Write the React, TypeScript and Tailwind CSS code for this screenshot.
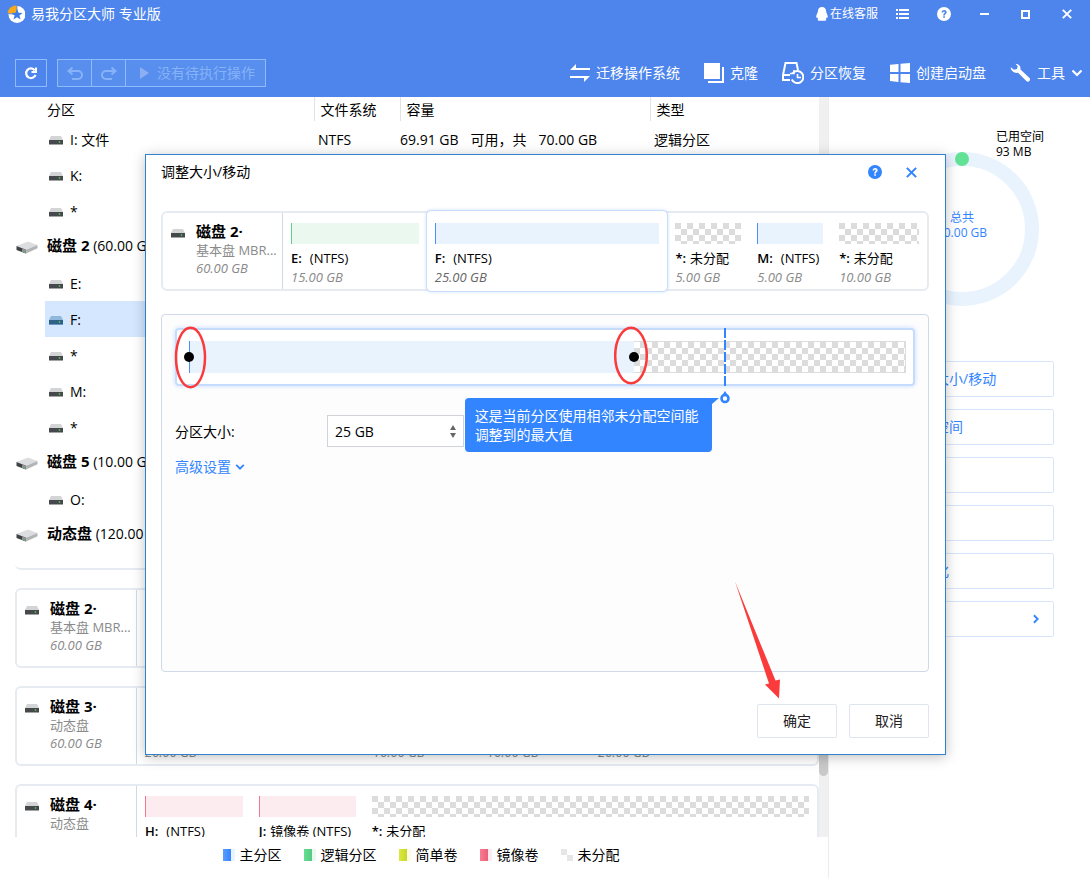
import { useState } from "react";
import type { ReactNode } from "react";
import clsx from "clsx";

type Kind = "primary" | "logical" | "mirror" | "free";

type Partition = {
  name: string;
  fs: string;
  size: string;
  weight: number;
  kind: Kind;
  selected?: boolean;
};

type Row = {
  label: string;
  disk?: string;
  fs?: string;
  free?: string;
  total?: string;
  type?: string;
  selected?: boolean;
};

const rows: Row[] = [
  { label: "I: 文件", fs: "NTFS", free: "69.91 GB", total: "70.00 GB", type: "逻辑分区" },
  { label: "K:" },
  { label: "*" },
  { label: "(60.00 GB)", disk: "磁盘 2" },
  { label: "E:" },
  { label: "F:", selected: true },
  { label: "*" },
  { label: "M:" },
  { label: "*" },
  { label: "(10.00 GB)", disk: "磁盘 5" },
  { label: "O:" },
  { label: "(120.00 GB)", disk: "动态盘" },
];

const disk2: Partition[] = [
  { name: "E:", fs: "(NTFS)", size: "15.00 GB", weight: 144, kind: "logical" },
  { name: "F:", fs: "(NTFS)", size: "25.00 GB", weight: 241, kind: "primary", selected: true },
  { name: "*:", fs: "未分配", size: "5.00 GB", weight: 82, kind: "free" },
  { name: "M:", fs: "(NTFS)", size: "5.00 GB", weight: 82, kind: "primary" },
  { name: "*:", fs: "未分配", size: "10.00 GB", weight: 96, kind: "free" },
];

const disk3: Partition[] = [
  { name: "G:", fs: "(NTFS)", size: "20.00 GB", weight: 228, kind: "mirror" },
  { name: "L:", fs: "(NTFS)", size: "10.00 GB", weight: 114, kind: "mirror" },
  { name: "N:", fs: "(NTFS)", size: "10.00 GB", weight: 111, kind: "mirror" },
  { name: "*:", fs: "未分配", size: "20.00 GB", weight: 227, kind: "free" },
];

const disk4: Partition[] = [
  { name: "H:", fs: "(NTFS)", size: "10.00 GB", weight: 114, kind: "mirror" },
  { name: "J:", fs: "镜像卷 (NTFS)", size: "10.00 GB", weight: 113, kind: "mirror" },
  { name: "*:", fs: "未分配", size: "40.00 GB", weight: 454, kind: "free" },
];

const legend = [
  { label: "主分区", color: "from-[#5a9dff] to-[#3385ff]", tint: "bg-[#e9f3fe]" },
  { label: "逻辑分区", color: "from-[#68dc94] to-[#52cb80]", tint: "bg-[#ebf8f0]" },
  { label: "简单卷", color: "from-[#dbe83c] to-[#c8d52e]", tint: "bg-[#fafce6]" },
  { label: "镜像卷", color: "from-[#f87c92] to-[#ea6078]", tint: "bg-[#fdecef]" },
];

const actions = ["调整大小/移动", "分配空间", "合并", "删除", "格式化"];

const barStyles: Record<Kind, string> = {
  primary: "border-l border-[#4c8ff7] bg-[#e9f3fe]",
  logical: "border-l border-[#5fd08c] bg-[#ebf8f0]",
  mirror: "border-l border-[#f0788e] bg-[#fdecef]",
  free: "bg-[repeating-conic-gradient(#fff_0_25%,#dcdcdc_0_50%)] bg-[length:12px_12px]",
};

// Slider range in GB
const RANGE = 40.3;
const MAX_SIZE = 30.05;

function DriveIcon({ selected }: { selected?: boolean }) {
  return (
    <svg width="14" height="9" viewBox="0 0 14 9" className="shrink-0" aria-hidden="true">
      <path d="M2 0h10l2 4H0z" fill={selected ? "#8fb8dc" : "#d2d4d6"} />
      <rect y="4" width="14" height="4" fill={selected ? "#2f6187" : "#46494b"} />
      <rect y="8" width="14" height="1" fill={selected ? "#6c97bd" : "#a2a4a6"} />
      <circle cx="10.5" cy="6" r="0.8" fill="#4df04d" />
    </svg>
  );
}

function DiskIcon() {
  return (
    <svg width="22" height="13" viewBox="0 0 22 13" aria-hidden="true">
      <path d="M0.5 5L12 0.5L21.5 4L10 8.8z" fill="#dcdddf" />
      <path d="M10 8.8L21.5 4V7.2L10 12.5z" fill="#b2b4b6" />
      <path d="M0.5 5L10 8.8V12.5L0.5 9z" fill="#3f4244" />
      <path d="M6 7.2L10 8.8V12.5L6 11z" fill="#8d9092" />
      <circle cx="8" cy="10.2" r="0.8" fill="#4fbf5c" />
    </svg>
  );
}

function HelpIcon({ className }: { className?: string }) {
  return (
    <svg width="14" height="14" viewBox="0 0 14 14" className={className} aria-hidden="true">
      <path
        fillRule="evenodd"
        fill="currentColor"
        d="M7 0a7 7 0 1 0 0 14A7 7 0 0 0 7 0zM4.6 5.4C4.6 3.9 5.6 3 7.1 3s2.5.9 2.5 2.2c0 1-.5 1.5-1.1 2-.5.4-.6.6-.6 1.2H6.2c0-1 .3-1.5.9-2 .5-.4.7-.6.7-1.1 0-.5-.3-.8-.8-.8s-.8.3-.8.9zM6.2 9.2h1.7v1.6H6.2z"
      />
    </svg>
  );
}

function CloseIcon({ size }: { size: number }) {
  return (
    <svg width={size} height={size} viewBox="0 0 10 10" aria-hidden="true">
      <path d="M0.8 0.8l8.4 8.4M9.2 0.8L0.8 9.2" stroke="currentColor" strokeWidth="1.9" fill="none" />
    </svg>
  );
}

function Chevron({ width, className }: { width: number; className?: string }) {
  return (
    <svg width={width} height={width} viewBox="0 0 12 12" className={className} aria-hidden="true">
      <path d="M1.5 3.5L6 8l4.5-4.5" stroke="currentColor" strokeWidth="2.2" fill="none" />
    </svg>
  );
}

function TitleButton({ label, children }: { label: string; children: ReactNode }) {
  return (
    <button type="button" aria-label={label} className="flex h-7 w-[41px] items-center justify-center">
      {children}
    </button>
  );
}

function ToolItem({ icon, label, children }: { icon: ReactNode; label: string; children?: ReactNode }) {
  return (
    <button type="button" className="flex items-center gap-1.5 whitespace-nowrap">
      {icon}
      {label}
      {children}
    </button>
  );
}

function Header() {
  return (
    <header className="bg-[#4d85ec] pb-2.5 text-white">
      <div className="flex h-7 items-center justify-between pr-[3px] pl-[7px]">
        <div className="flex items-center gap-1.5">
          <svg width="18" height="18" viewBox="0 0 18 18" aria-hidden="true">
            <circle cx="10" cy="9.5" r="8.5" fill="#fff" />
            <path d="M10 9.5V0A9.5 9.5 0 0 0 0 8.5z" fill="#f9a81a" stroke="#4d85ec" strokeWidth="0.8" />
            <path
              d="M10 3.8l1.5 3.9 4.1.2-3.2 2.6 1.1 4-3.5-2.3-3.5 2.3 1.1-4-3.2-2.6 4.1-.2z"
              fill="#3f7be6"
            />
          </svg>
          <h1>易我分区大师 专业版</h1>
        </div>
        <div className="flex items-center">
          <a href="#service" className="mr-1 flex items-center gap-0.5 text-xs">
            <svg width="12" height="14" viewBox="0 0 12 14" aria-hidden="true">
              <path
                d="M6 0C3.400 0 1.900 1.900 1.900 4.300C1.900 5.800.2 7.600.2 9.800c0 1.100.6 1.300 1.200.6.2.7.5 1.200.9 1.600-.9.5-.9 1.800.6 1.800h6.200c1.500 0 1.500-1.300.6-1.800.4-.4.7-.9.9-1.600.6.7 1.200.5 1.200-.6 0-2.200-1.700-4-1.700-5.500C10.100 1.900 8.600 0 6 0z"
                fill="#fff"
              />
            </svg>
            在线客服
          </a>
          <TitleButton label="菜单">
            <svg width="13" height="10" viewBox="0 0 13 10" fill="#fff" aria-hidden="true">
              <path d="M0 0h2v2H0zM3 0h10v2H3zM0 4h2v2H0zM3 4h10v2H3zM0 8h2v2H0zM3 8h10v2H3z" />
            </svg>
          </TitleButton>
          <TitleButton label="帮助">
            <HelpIcon />
          </TitleButton>
          <TitleButton label="最小化">
            <span className="h-0.5 w-[9px] bg-white" />
          </TitleButton>
          <TitleButton label="最大化">
            <span className="size-[9px] border-2 border-white" />
          </TitleButton>
          <TitleButton label="关闭">
            <CloseIcon size={10} />
          </TitleButton>
        </div>
      </div>

      <div className="mt-[31px] flex h-7 items-stretch justify-between pr-[7px] pl-[15px]">
        <div className="flex gap-2.5">
          <button
            type="button"
            aria-label="刷新"
            className="flex w-8 items-center justify-center border border-[#8fbafb]"
          >
            <svg width="14" height="14" viewBox="0 0 14 14" fill="none" aria-hidden="true">
              <path d="M10.800 4.400A4.800 4.800 0 1 0 11.500 8.800" stroke="#fff" strokeWidth="2.200" />
              <path d="M13 1.500V7H7.500V5H11V1.500z" fill="#fff" />
            </svg>
          </button>
          <div className="flex divide-x divide-[#8fbafb] border border-[#8fbafb] bg-[#588eee] text-[#86b3f8]">
            <button type="button" aria-label="撤销" className="flex w-[34px] items-center justify-center">
              <svg width="16" height="13" viewBox="0 0 16 13" fill="none" aria-hidden="true">
                <path d="M1 4h10a4 4 0 0 1 0 8H5" stroke="currentColor" strokeWidth="2" />
                <path d="M5.500 0.500L1.500 4l4 3.500" stroke="currentColor" strokeWidth="2" />
              </svg>
            </button>
            <button type="button" aria-label="重做" className="flex w-[34px] items-center justify-center">
              <svg width="16" height="13" viewBox="0 0 16 13" fill="none" aria-hidden="true">
                <path d="M15 4H5a4 4 0 0 0 0 8h6" stroke="currentColor" strokeWidth="2" />
                <path d="M10.500 0.500l4 3.500-4 3.500" stroke="currentColor" strokeWidth="2" />
              </svg>
            </button>
            <button type="button" className="flex items-center gap-2 pr-2.5 pl-3.5">
              <svg width="9" height="12" viewBox="0 0 9 12" aria-hidden="true">
                <path d="M0 0l9 6-9 6z" fill="#8caff3" />
              </svg>
              没有待执行操作
            </button>
          </div>
        </div>

        <nav className="flex gap-6">
          <ToolItem
            label="迁移操作系统"
            icon={
              <svg width="20" height="20" viewBox="0 0 20 20" fill="#fff" aria-hidden="true">
                <path d="M0 7L6 1v4h14v2zM20 13l-6 6v-4H0v-2z" />
              </svg>
            }
          />
          <ToolItem
            label="克隆"
            icon={
              <svg width="20" height="20" viewBox="0 0 20 20" fill="#fff" aria-hidden="true">
                <path d="M0 0h16v16H0zM18 4h2v16H4v-2h14z" />
              </svg>
            }
          />
          <ToolItem
            label="分区恢复"
            icon={
              <svg width="22" height="22" viewBox="0 0 22 22" fill="none" stroke="#fff" strokeWidth="2" aria-hidden="true">
                <path d="M8 18H1v-5L3.500 1h11L16 8" />
                <path d="M1 13h7" />
                <path d="M10.500 11.500A6 6 0 1 1 9.800 17.500" />
                <path d="M8 11.500h4V8" strokeWidth="1.600" />
                <path d="M15.500 12v3.500H19" strokeWidth="1.600" />
              </svg>
            }
          />
          <ToolItem
            label="创建启动盘"
            icon={
              <svg width="20" height="20" viewBox="0 0 20 20" fill="#fff" aria-hidden="true">
                <path d="M0 1.800L8.500.9V9H0zM10.500.7L20 0v9h-9.500zM0 11h8.500v8L0 18zM10.500 11H20v9l-9.500-.8z" />
              </svg>
            }
          />
          <ToolItem
            label="工具"
            icon={
              <svg width="21" height="20" viewBox="0 0 21 20" aria-hidden="true">
                <path
                  d="M5.500.7c3 0 5.400 2.300 5 5.700l9 8.600c1.600 1.600-.8 5-2.900 3.300L8 9.800C4.500 10.600.5 8 .8 4.200L4 6.800l3-.9.7-2.700z"
                  fill="#fff"
                />
              </svg>
            }
          >
            <Chevron width={12} />
          </ToolItem>
        </nav>
      </div>
    </header>
  );
}

function PartitionTable() {
  return (
    <table className="w-full table-fixed border-collapse text-left whitespace-nowrap">
      <colgroup>
        <col className="w-[45px]" />
        <col className="w-[269px]" />
        <col className="w-[86px]" />
        <col className="w-[250px]" />
        <col />
      </colgroup>
      <thead>
        <tr className="h-6">
          <th className="p-0" />
          <th className="p-0 pt-0.5 pl-0.5 font-normal">分区</th>
          <th className="border-l border-[#dfe3e8] p-0 pt-0.5 pl-1.5 font-normal">文件系统</th>
          <th className="border-l border-[#dfe3e8] p-0 pt-0.5 pl-1.5 font-normal">容量</th>
          <th className="border-l border-[#dfe3e8] p-0 pt-0.5 pl-1.5 font-normal">类型</th>
        </tr>
      </thead>
      <tbody>
        {rows.map((row, i) => {
          const cell = clsx("p-0", row.disk ? "pb-0.5" : "pt-0.5", row.selected && "bg-[#d4e7fe]");
          return (
            <tr key={i} className="h-9">
              <td className="p-0 pl-4">{row.disk && <DiskIcon />}</td>
              <td className={cell}>
                {row.disk ? (
                  <span className="pl-0.5">
                    <b className="text-[15px]">{row.disk}</b> {row.label}
                  </span>
                ) : (
                  <span className="flex items-center gap-[7px] pl-1">
                    <DriveIcon selected={row.selected} />
                    {row.label}
                  </span>
                )}
              </td>
              <td className={clsx(cell, "pl-1")}>{row.fs}</td>
              <td className={cell}>
                {row.free && (
                  <span className="flex gap-3">
                    <span>{row.free}</span>
                    <span>可用，共</span>
                    <span>{row.total}</span>
                  </span>
                )}
              </td>
              <td className={clsx(cell, "pl-1")}>{row.type}</td>
            </tr>
          );
        })}
      </tbody>
    </table>
  );
}

function DiskCard({
  title,
  kind,
  size,
  partitions,
}: {
  title: string;
  kind: string;
  size: string;
  partitions: Partition[];
}) {
  return (
    <div className="flex h-20 shrink-0 rounded-md border-2 border-[#e6ebf1] bg-white">
      <div className="flex w-[120px] shrink-0 gap-[11px] border-r border-[#cfd9e8] pt-2 pl-2">
        <span className="pt-2">
          <DriveIcon />
        </span>
        <div className="min-w-0 text-[13px] text-[#8a8a8a]">
          <p className="text-[15px] leading-5 font-bold text-black">{title}</p>
          <p className="leading-[18px] whitespace-nowrap">{kind}</p>
          <p className="leading-[18px] italic">{size}</p>
        </div>
      </div>
      <div className="flex min-w-0 flex-1">
        {partitions.map((p, i) => (
          <div
            key={i}
            className={clsx(
              "min-w-0 basis-0",
              p.selected && "-my-0.5 rounded bg-white py-0.5 shadow-[0_0_4px_#b5d2fb] outline outline-[#c9defc]",
            )}
            style={{ flexGrow: p.weight }}
          >
            <div className="px-2 pt-2.5">
              <div className={clsx("h-[21px]", barStyles[p.kind])} />
              <p className="mt-1 text-[13px] leading-5 whitespace-nowrap">
                <span className={clsx("font-semibold", p.fs.startsWith("(") ? "mr-2" : "mr-1")}>{p.name}</span>
                {p.fs}
              </p>
              <p
                className={clsx(
                  "text-[13px] leading-[18px] italic",
                  p.selected ? "font-medium text-[#666]" : "text-[#8a8a8a]",
                )}
              >
                {p.size}
              </p>
            </div>
          </div>
        ))}
      </div>
    </div>
  );
}

function Legend() {
  return (
    <ul className="flex h-[41px] items-center justify-center gap-[22px] pb-1.5 pl-3.5">
      {legend.map((item) => (
        <li key={item.label} className="flex items-center gap-[5px]">
          <span className="flex h-3">
            <span className={clsx("w-2 bg-linear-to-r", item.color)} />
            <span className={clsx("w-1", item.tint)} />
          </span>
          {item.label}
        </li>
      ))}
      <li className="flex items-center gap-[5px]">
        <span className="flex h-3">
          <span className="size-1.5 bg-[#e6e6e6]" />
          <span className="size-1.5 self-end bg-[#e6e6e6]" />
        </span>
        未分配
      </li>
    </ul>
  );
}

function Sidebar() {
  return (
    <aside className="w-[262px] shrink-0 border-l border-[#ececec] pr-9 pl-[41px] text-[#3385ff]">
      <div className="relative mx-auto mt-[55px] size-[154px]">
        <svg viewBox="0 0 154 154" className="size-full" aria-hidden="true">
          <circle cx="77" cy="77" r="70" stroke="#e9f3fe" strokeWidth="14" fill="none" />
          <circle cx="77" cy="7" r="7" fill="#62e295" />
        </svg>
        <p className="absolute inset-0 flex flex-col items-center justify-center pb-2 text-xs leading-[15px]">
          <span>总共</span>
          <span>20.00 GB</span>
        </p>
        <p className="absolute -top-[23px] left-[111px] text-xs leading-[15px] whitespace-nowrap text-black">
          已用空间
          <br />
          93 MB
        </p>
      </div>
      <div className="mt-[55px] flex flex-col gap-3">
        {actions.map((label) => (
          <button key={label} type="button" className="h-9 rounded-xs border border-[#d6e6fd] pl-9 text-left">
            {label}
          </button>
        ))}
        <button
          type="button"
          className="flex h-9 items-center justify-between rounded-xs border border-[#d6e6fd] pr-3 pl-9"
        >
          更多
          <Chevron width={10} className="-rotate-90" />
        </button>
      </div>
    </aside>
  );
}

function RangeThumb({ label, value, onChange }: { label: string; value: number; onChange: (v: number) => void }) {
  return (
    <input
      type="range"
      aria-label={label}
      min={0}
      max={RANGE}
      step="any"
      value={value}
      onChange={(e) => onChange(Number(e.target.value))}
      className="pointer-events-none absolute inset-y-0 -left-[5px] w-[calc(100%+10px)] appearance-none bg-transparent [&::-webkit-slider-thumb]:pointer-events-auto [&::-webkit-slider-thumb]:size-2.5 [&::-webkit-slider-thumb]:appearance-none [&::-webkit-slider-thumb]:rounded-full [&::-webkit-slider-thumb]:bg-black"
    />
  );
}

function SizeSlider({
  start,
  end,
  onStart,
  onEnd,
}: {
  start: number;
  end: number;
  onStart: (v: number) => void;
  onEnd: (v: number) => void;
}) {
  const pct = (v: number) => `${(v / RANGE) * 100}%`;
  return (
    <div className="rounded border-2 border-[#c6dcfd] bg-white py-[11px] pr-[7px] pl-3 shadow-[0_0_5px_#c6dcfd]">
      <div className="relative flex h-8">
        <div style={{ width: pct(start) }} />
        <div className="border-l border-[#4c8ff7] bg-[#e9f3fe]" style={{ width: pct(end - start) }} />
        <div className="flex-1 border border-l-0 border-[#dcdcdc] bg-[repeating-conic-gradient(#dcdcdc_0_25%,#fff_0_50%)] bg-[length:12px_12px]" />

        <div
          className="absolute -inset-y-[13px] w-0.5 bg-[repeating-linear-gradient(#3385ff_0_10px,#fff_10px_12px)]"
          style={{ left: pct(MAX_SIZE) }}
        >
          <svg width="10" height="13" viewBox="0 0 10 13" className="absolute -bottom-[18px] -left-1" aria-hidden="true">
            <path d="M5 0l3 4.500H2z" fill="#3385ff" />
            <circle cx="5" cy="7.500" r="3.500" fill="#fff" stroke="#3385ff" strokeWidth="2.600" />
          </svg>
          <div
            role="tooltip"
            className="absolute top-[70px] right-[14px] w-[247px] rounded rounded-tr-none bg-[#3385ff] px-2.5 py-2 leading-[19px] text-white"
          >
            这是当前分区使用相邻未分配空间能调整到的最大值
            <svg width="7" height="6" viewBox="0 0 7 6" className="absolute top-0 -right-[7px]" aria-hidden="true">
              <path d="M0 0h7L0 6z" fill="#3385ff" />
            </svg>
          </div>
        </div>

        <RangeThumb label="起始位置" value={start} onChange={onStart} />
        <RangeThumb label="结束位置" value={end} onChange={onEnd} />
        <svg
          width="34"
          height="64"
          viewBox="0 0 34 64"
          className="pointer-events-none absolute -top-4 -left-4"
          aria-hidden="true"
        >
          <ellipse cx="17.500" cy="32.500" rx="14.500" ry="29.800" stroke="#fb3b3b" strokeWidth="2.500" fill="none" />
        </svg>
        <div className="pointer-events-none absolute -top-4" style={{ left: pct(end) }}>
          <svg width="36" height="60" viewBox="0 0 36 60" className="-ml-5" aria-hidden="true">
            <ellipse cx="17" cy="30.500" rx="15.800" ry="27.800" stroke="#fb3b3b" strokeWidth="2.500" fill="none" />
          </svg>
        </div>
      </div>
    </div>
  );
}

function ResizeDialog() {
  const [start, setStart] = useState(0);
  const [end, setEnd] = useState(25);
  const [size, setSize] = useState("25 GB");

  return (
    <section
      role="dialog"
      aria-labelledby="dialog-title"
      className="relative flex min-h-[601px] w-full flex-col border border-[#2f82cb] bg-white pr-4 pb-4 pl-[15px] shadow-[0_2px_12px_rgba(0,0,0,0.25)]"
    >
      <div className="mb-[22px] flex h-[34px] items-center justify-between pr-3">
        <h2 id="dialog-title">调整大小/移动</h2>
        <div className="flex items-center gap-6 text-[#3385ff]">
          <button type="button" aria-label="帮助">
            <HelpIcon />
          </button>
          <button type="button" aria-label="关闭">
            <CloseIcon size={11} />
          </button>
        </div>
      </div>

      <DiskCard title="磁盘 2·" kind="基本盘 MBR..." size="60.00 GB" partitions={disk2} />

      <div className="mt-[23px] flex-1 rounded border border-[#cfd9e8] bg-[#fdfdfd] p-[13px]">
        <SizeSlider
          start={start}
          end={end}
          onStart={(v) => setStart(Math.min(v, end))}
          onEnd={(v) => {
            const next = Math.max(start, Math.min(v, MAX_SIZE));
            setEnd(next);
            setSize(`${Math.round(next - start)} GB`);
          }}
        />
        <div className="mt-[29px] flex items-center">
          <label htmlFor="size" className="w-[152px] pt-0.5">
            分区大小:
          </label>
          <div className="flex h-8 w-[137px] items-center border border-[#d0d4d9] bg-white pr-[7px] pl-[7px]">
            <input
              id="size"
              type="text"
              value={size}
              onChange={(e) => setSize(e.target.value)}
              className="min-w-0 flex-1 pt-0.5 outline-none"
            />
            <svg width="6" height="13" viewBox="0 0 6 13" fill="#666" aria-hidden="true">
              <path d="M3 0l3 5H0zM3 13L0 8h6z" />
            </svg>
          </div>
        </div>
        <button type="button" className="mt-2.5 flex h-5 items-center gap-1 text-[#3385ff]">
          高级设置
          <Chevron width={10} />
        </button>
      </div>

      <div className="mt-8 flex justify-end gap-3 text-[#222]">
        <button type="button" className="h-[34px] w-20 rounded-xs border border-[#dfe5ee]">
          确定
        </button>
        <button type="button" className="h-[34px] w-20 rounded-xs border border-[#dfe5ee]">
          取消
        </button>
      </div>

      <svg
        width="46"
        height="118"
        viewBox="0 0 46 118"
        className="pointer-events-none absolute right-[164px] bottom-[55px]"
        aria-hidden="true"
      >
        <path d="M0 0.500L40.500 99.500L45 98.500L44 117.500L30 103.500L34 102.500z" fill="#fb3b3b" />
      </svg>
    </section>
  );
}

export default function App() {
  return (
    <div className="relative flex h-screen flex-col overflow-hidden bg-white font-['Open_Sans','Noto_Sans_CJK_SC',sans-serif] text-sm text-black">
      <Header />
      <div className="flex min-h-0 flex-1">
        <main className="flex min-w-0 flex-1 flex-col">
          <div className="flex min-h-0 flex-1">
            <div className="flex min-w-0 flex-1 flex-col">
              <PartitionTable />
              <div className="flex min-h-0 flex-1 flex-col gap-[18px] overflow-hidden pl-[15px]">
                <div className="h-[17px] shrink-0 rounded-b-md border-b-2 border-[#e6ebf1]" />
                <DiskCard title="磁盘 2·" kind="基本盘 MBR..." size="60.00 GB" partitions={disk2} />
                <DiskCard title="磁盘 3·" kind="动态盘" size="60.00 GB" partitions={disk3} />
                <DiskCard title="磁盘 4·" kind="动态盘" size="60.00 GB" partitions={disk4} />
              </div>
            </div>
            <div className="flex w-[9px] flex-col bg-[#f0f0f0] pb-[61px]">
              <div className="mt-auto h-40 rounded-full bg-[#c9c9c9]" />
            </div>
          </div>
          <Legend />
        </main>
        <Sidebar />
      </div>
      <div className="absolute inset-x-0 top-[154px] pr-36 pl-[145px]">
        <ResizeDialog />
      </div>
    </div>
  );
}
